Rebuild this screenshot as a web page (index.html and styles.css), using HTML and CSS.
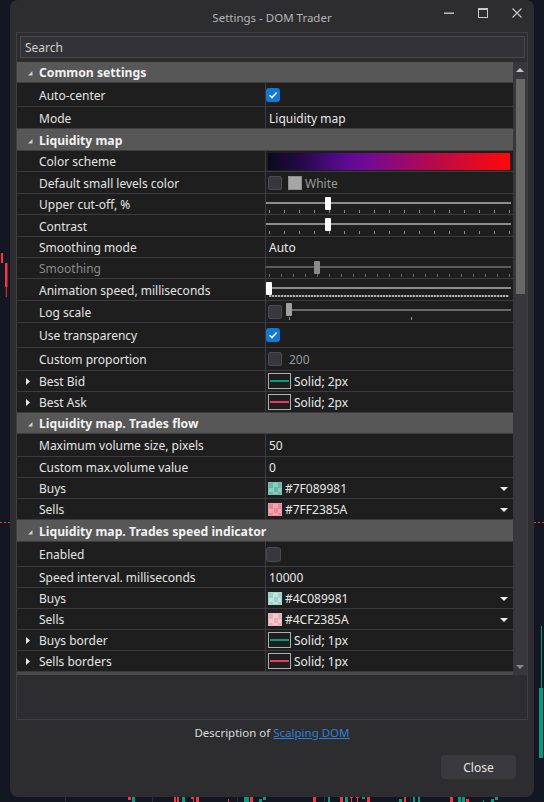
FILE: index.html
```html
<!DOCTYPE html>
<html>
<head>
<meta charset="utf-8">
<title>Settings - DOM Trader</title>
<link rel="stylesheet" href="styles.css">
</head>
<body>
<svg class="chart" width="544" height="802" viewBox="0 0 544 802">
  <g fill="#f23645">
    <rect x="1" y="253" width="2" height="10"/>
    <rect x="5" y="263" width="2.5" height="24"/>
    <rect x="5.8" y="286" width="1" height="11"/>
  </g>
  <rect x="10" y="283" width="1" height="3" fill="#089981"/>
  <line x1="0" y1="522.5" x2="10" y2="522.5" stroke="#f23645" stroke-dasharray="2 2"/>
  <line x1="534" y1="522.5" x2="544" y2="522.5" stroke="#f23645" stroke-dasharray="2 2"/>
  <rect x="541" y="626" width="1" height="64" fill="#089981"/>
  <rect x="539" y="688" width="4" height="70" fill="#089981"/>
  <g fill="#2a2e39">
    <rect x="65" y="797" width="1" height="5"/>
    <rect x="152" y="797" width="1" height="5"/>
    <rect x="237" y="797" width="1" height="5"/>
    <rect x="324" y="797" width="1" height="5"/>
    <rect x="410" y="797" width="1" height="5"/>
  </g>
  <g fill="#f23645">
    <rect x="128" y="797" width="3" height="3"/>
    <rect x="174" y="797" width="2" height="5"/>
    <rect x="177" y="797" width="2" height="5"/>
    <rect x="191" y="797" width="3" height="2"/>
    <rect x="193" y="797" width="1" height="5"/>
    <rect x="196" y="797" width="3" height="5"/>
    <rect x="228" y="799" width="1" height="3"/>
    <rect x="250" y="797" width="3" height="5"/>
    <rect x="313" y="797" width="3" height="5"/>
    <rect x="340" y="797" width="3" height="5"/>
    <rect x="350" y="797" width="3" height="1"/>
    <rect x="351" y="797" width="1" height="5"/>
    <rect x="356" y="797" width="3" height="1"/>
    <rect x="357" y="797" width="1" height="5"/>
    <rect x="367" y="797" width="3" height="5"/>
    <rect x="404" y="797" width="2" height="5"/>
    <rect x="450" y="797" width="3" height="5"/>
    <rect x="466" y="799" width="3" height="3"/>
  </g>
  <g fill="#089981">
    <rect x="132" y="797" width="3" height="5"/>
    <rect x="182" y="797" width="3" height="5"/>
    <rect x="244" y="797" width="3" height="5"/>
    <rect x="247" y="797" width="2" height="5"/>
    <rect x="259" y="799" width="3" height="3"/>
    <rect x="263" y="797" width="3" height="3"/>
    <rect x="328" y="797" width="2" height="5"/>
    <rect x="345" y="797" width="3" height="5"/>
    <rect x="362" y="797" width="3" height="2"/>
    <rect x="399" y="799" width="3" height="3"/>
    <rect x="413" y="797" width="2" height="5"/>
    <rect x="418" y="797" width="2" height="5"/>
    <rect x="458" y="797" width="3" height="5"/>
    <rect x="462" y="797" width="3" height="5"/>
    <rect x="483" y="800" width="1" height="2"/>
    <rect x="491" y="799" width="3" height="3"/>
    <rect x="495" y="797" width="3" height="3"/>
  </g>
</svg>

<div class="window">
  <div class="titlebar">
    <div class="title">Settings - DOM Trader</div>
    <div class="controls">
      <div class="ctl"><svg width="10" height="10" viewBox="0 0 10 10"><rect x="0" y="4.5" width="10" height="1.4" fill="#c8c8c8"/></svg></div>
      <div class="ctl"><svg width="10" height="10" viewBox="0 0 10 10"><rect x="0.5" y="0.5" width="9" height="9" fill="none" stroke="#c8c8c8"/><rect x="0" y="0" width="10" height="2" fill="#c8c8c8"/></svg></div>
      <div class="ctl"><svg width="10" height="10" viewBox="0 0 10 10"><path d="M0.5 0.5 L9.5 9.5 M9.5 0.5 L0.5 9.5" stroke="#c8c8c8" stroke-width="1.1"/></svg></div>
    </div>
  </div>

  <div class="panel">
    <div class="search">Search</div>
    <div class="grid">
      <div class="rows">
        <div class="row hdr h21"><span class="exp"><svg width="5" height="5" viewBox="0 0 5 5"><polygon points="4.5,0 4.5,4.5 0,4.5" fill="#d0d0d0"/></svg></span>Common settings</div>
        <div class="row h24"><div class="name"><span class="exp"></span>Auto-center</div><div class="val"><span class="cb on"><svg width="14" height="14" viewBox="0 0 14 14"><polyline points="3.5,7.2 6,9.6 10.6,4.6" fill="none" stroke="#fff" stroke-width="1.5"/></svg></span></div></div>
        <div class="row h22"><div class="name"><span class="exp"></span>Mode</div><div class="val"><span class="txt">Liquidity map</span></div></div>

        <div class="row hdr h22"><span class="exp"><svg width="5" height="5" viewBox="0 0 5 5"><polygon points="4.5,0 4.5,4.5 0,4.5" fill="#d0d0d0"/></svg></span>Liquidity map</div>
        <div class="row h21"><div class="name"><span class="exp"></span>Color scheme</div><div class="val"><span class="gradient"></span></div></div>
        <div class="row h22"><div class="name"><span class="exp"></span>Default small levels color</div><div class="val"><span class="cb off"></span><span class="gray-sw"></span><span class="dim-txt">White</span></div></div>
        <div class="row h21"><div class="name"><span class="exp"></span>Upper cut-off, %</div><div class="val"><div class="slider"><span class="track"></span><span class="ticks t15"></span><span class="thumb" style="left:59px"></span></div></div></div>
        <div class="row h22"><div class="name"><span class="exp"></span>Contrast</div><div class="val"><div class="slider"><span class="track"></span><span class="ticks t15"></span><span class="thumb" style="left:59px"></span></div></div></div>
        <div class="row h21"><div class="name"><span class="exp"></span>Smoothing mode</div><div class="val"><span class="txt">Auto</span></div></div>
        <div class="row h21"><div class="name disabled"><span class="exp"></span>Smoothing</div><div class="val"><div class="slider dis"><span class="track"></span><span class="ticks t12"></span><span class="thumb" style="left:48px"></span></div></div></div>
        <div class="row h22"><div class="name"><span class="exp"></span>Animation speed, milliseconds</div><div class="val"><div class="slider"><span class="track"></span><span class="ticks dense"></span><span class="thumb" style="left:0px"></span></div></div></div>
        <div class="row h22"><div class="name"><span class="exp"></span>Log scale</div><div class="val"><span class="cb off"></span><div class="slider log"><span class="track"></span><span class="tick" style="left:3px"></span><span class="tick" style="left:125px"></span><span class="thumb" style="left:0px"></span></div></div></div>
        <div class="row h25"><div class="name"><span class="exp"></span>Use transparency</div><div class="val"><span class="cb on"><svg width="14" height="14" viewBox="0 0 14 14"><polyline points="3.5,7.2 6,9.6 10.6,4.6" fill="none" stroke="#fff" stroke-width="1.5"/></svg></span></div></div>
        <div class="row h23"><div class="name"><span class="exp"></span>Custom proportion</div><div class="val"><span class="cb off"></span><span class="dim-txt num">200</span></div></div>
        <div class="row h21"><div class="name"><span class="exp"><svg width="4" height="7" viewBox="0 0 4 7"><polygon points="0,0 4,3.5 0,7" fill="#e8e8e8"/></svg></span>Best Bid</div><div class="val"><span class="line-sw teal"></span><span class="txt">Solid; 2px</span></div></div>
        <div class="row h21"><div class="name"><span class="exp"><svg width="4" height="7" viewBox="0 0 4 7"><polygon points="0,0 4,3.5 0,7" fill="#e8e8e8"/></svg></span>Best Ask</div><div class="val"><span class="line-sw red"></span><span class="txt">Solid; 2px</span></div></div>

        <div class="row hdr h21"><span class="exp"><svg width="5" height="5" viewBox="0 0 5 5"><polygon points="4.5,0 4.5,4.5 0,4.5" fill="#d0d0d0"/></svg></span>Liquidity map. Trades flow</div>
        <div class="row h23"><div class="name"><span class="exp"></span>Maximum volume size, pixels</div><div class="val"><span class="txt">50</span></div></div>
        <div class="row h21"><div class="name"><span class="exp"></span>Custom max.volume value</div><div class="val"><span class="txt">0</span></div></div>
        <div class="row h21"><div class="name"><span class="exp"></span>Buys</div><div class="val"><span class="chk teal50"></span><span class="txt hex">#7F089981</span><span class="dd"><svg width="8" height="4" viewBox="0 0 8 4"><polygon points="0,0 8,0 4,4" fill="#f0f0f0"/></svg></span></div></div>
        <div class="row h21"><div class="name"><span class="exp"></span>Sells</div><div class="val"><span class="chk red50"></span><span class="txt hex">#7FF2385A</span><span class="dd"><svg width="8" height="4" viewBox="0 0 8 4"><polygon points="0,0 8,0 4,4" fill="#f0f0f0"/></svg></span></div></div>

        <div class="row hdr h22"><span class="exp"><svg width="5" height="5" viewBox="0 0 5 5"><polygon points="4.5,0 4.5,4.5 0,4.5" fill="#d0d0d0"/></svg></span>Liquidity map. Trades speed indicator</div>
        <div class="row h25"><div class="name"><span class="exp"></span>Enabled</div><div class="val"><span class="cb off big"></span></div></div>
        <div class="row h21"><div class="name"><span class="exp"></span>Speed interval. milliseconds</div><div class="val"><span class="txt">10000</span></div></div>
        <div class="row h21"><div class="name"><span class="exp"></span>Buys</div><div class="val"><span class="chk teal30"></span><span class="txt hex">#4C089981</span><span class="dd"><svg width="8" height="4" viewBox="0 0 8 4"><polygon points="0,0 8,0 4,4" fill="#f0f0f0"/></svg></span></div></div>
        <div class="row h21"><div class="name"><span class="exp"></span>Sells</div><div class="val"><span class="chk red30"></span><span class="txt hex">#4CF2385A</span><span class="dd"><svg width="8" height="4" viewBox="0 0 8 4"><polygon points="0,0 8,0 4,4" fill="#f0f0f0"/></svg></span></div></div>
        <div class="row h21"><div class="name"><span class="exp"><svg width="4" height="7" viewBox="0 0 4 7"><polygon points="0,0 4,3.5 0,7" fill="#e8e8e8"/></svg></span>Buys border</div><div class="val"><span class="line-sw teal"></span><span class="txt">Solid; 1px</span></div></div>
        <div class="row h21"><div class="name"><span class="exp"><svg width="4" height="7" viewBox="0 0 4 7"><polygon points="0,0 4,3.5 0,7" fill="#e8e8e8"/></svg></span>Sells borders</div><div class="val"><span class="line-sw red"></span><span class="txt">Solid; 1px</span></div></div>
        <div class="hbar"></div>
      </div>
      <div class="sb">
        <div class="sb-btn"><svg width="8" height="4" viewBox="0 0 8 4"><polygon points="0,4 8,4 4,0" fill="#c8c8c8"/></svg></div>
        <div class="sb-thumb"></div>
        <div class="sb-space"></div>
        <div class="sb-btn"><svg width="8" height="4" viewBox="0 0 8 4"><polygon points="0,0 8,0 4,4" fill="#8a8a8a"/></svg></div>
      </div>
    </div>
    <div class="desc-area"></div>
  </div>

  <div class="desc">Description of <span class="link">Scalping DOM</span></div>
  <div class="footer"><div class="btn">Close</div></div>
</div>
</body>
</html>
```

FILE: styles.css
```css
* { box-sizing: border-box; }
html, body { margin: 0; padding: 0; }
body {
  width: 544px;
  height: 802px;
  overflow: hidden;
  position: relative;
  background: #131722;
  font-family: "Noto Sans", "Open Sans", "DejaVu Sans", sans-serif;
  font-size: 12px;
  color: #e4e4e4;
}
.chart { position: absolute; left: 0; top: 0; }

.window {
  position: relative;
  margin-left: 10px;
  width: 524px;
  height: 797px;
  background: #2d2d30;
  border-radius: 8px;
  display: flex;
  flex-direction: column;
}

.titlebar {
  height: 32px;
  flex: none;
  display: grid;
  grid-template-columns: 1fr auto 1fr;
}
.title {
  grid-column: 2;
  align-self: center;
  color: #b4b4b4;
  font-size: 11.5px;
  padding-top: 2px;
}
.controls {
  grid-column: 3;
  justify-self: end;
  display: flex;
}
.ctl {
  width: 34px;
  height: 26px;
  display: flex;
  align-items: center;
  justify-content: center;
}

.panel {
  margin: 0 6px;
  height: 688px;
  border: 1px solid #3f3f46;
  display: flex;
  flex-direction: column;
  flex: none;
}
.search {
  margin: 3px 2px 0 3px;
  height: 22px;
  background: #333337;
  border: 1px solid #48484e;
  color: #cfcfcf;
  padding-left: 4px;
  line-height: 21px;
  font-size: 12px;
}
.grid {
  margin-top: 4px;
  height: 613px;
  display: flex;
}
.rows {
  width: 496px;
  display: flex;
  flex-direction: column;
  background: #1e1e1e;
}
.row {
  display: flex;
  background: #1e1e1e;
  border-bottom: 1px solid #3b3b40;
}
.h21 { height: 21px; }
.h22 { height: 22px; }
.h23 { height: 23px; }
.h24 { height: 24px; }
.h25 { height: 25px; }

.hdr {
  background: #575757;
  border-bottom-color: #3d3d3d;
  align-items: center;
  font-weight: bold;
  font-size: 12.2px;
  color: #f2f2f2;
  white-space: nowrap;
  padding-top: 1px;
}
.exp {
  width: 22px;
  flex: none;
  display: flex;
  align-items: center;
  padding-left: 9px;
}
.hdr .exp svg { margin-left: 2px; margin-top: 2px; }

.name {
  width: 249px;
  flex: none;
  border-right: 1px solid #3b3b40;
  display: flex;
  align-items: center;
  white-space: nowrap;
  padding-top: 1px;
}
.name .exp svg { margin-top: -1px; }
.name.disabled { color: #8a8a8a; }
.val {
  flex: 1;
  display: flex;
  align-items: center;
  min-width: 0;
}
.txt { margin-left: 3px; color: #e8e8e8; white-space: nowrap; padding-top: 1px; }
.txt.hex { margin-left: 3px; }
.dim-txt { color: #9a9a9a; margin-left: 3px; padding-top: 1px; }
.dim-txt.num { margin-left: 7px; }

.cb {
  width: 14px;
  height: 14px;
  border-radius: 3px;
  flex: none;
  display: block;
}
.cb.on { background: #1079d6; margin-left: 0; }
.cb.on svg { display: block; }
.cb.off { background: #38383c; border: 1px solid #4a4a50; margin-left: 2px; border-radius: 2px; }
.cb.off.big { width: 15px; height: 15px; margin-left: 0; border-radius: 3px; }

.gradient {
  display: block;
  margin-left: 2px;
  width: 242px;
  height: 17px;
  background: linear-gradient(to right, #0a0a1e 0%, #240a48 14%, #500a84 28%, #6a0a9a 38%, #880a7c 50%, #ac0a56 64%, #d20a34 80%, #ff0808 100%);
}
.gray-sw {
  display: block;
  width: 14px;
  height: 14px;
  margin-left: 6px;
  background: #a6a6a6;
  border: 1px solid #8e8e8e;
}

.slider {
  position: relative;
  align-self: stretch;
  flex: 1;
  margin-right: 2px;
}
.slider .track {
  position: absolute;
  left: 0;
  right: 0;
  top: 8px;
  height: 2px;
  background: #8c8c8c;
}
.slider .thumb {
  position: absolute;
  top: 3px;
  width: 6px;
  height: 13px;
  background: #ffffff;
  border-radius: 1px;
}
.slider .ticks {
  position: absolute;
  top: 16px;
  left: 3px;
  width: 241px;
  height: 3px;
}
.ticks.t15 { background: repeating-linear-gradient(to right, #8c8c8c 0 1px, transparent 1px 15px); }
.ticks.t12 { background: repeating-linear-gradient(to right, #6a6a6a 0 1px, transparent 1px 12px); }
.ticks.dense { top: 16px; height: 2px; background: repeating-linear-gradient(to right, #a8a8a8 0 2px, #555 2px 3px); width: 240px; }
.slider.dis .track { background: #5c5c5c; }
.slider.dis .thumb { background: #8c8c8c; }
.slider.log { margin-left: 4px; }
.slider.log .track { background: #6a6a6a; top: 8px; }
.slider.log .thumb { background: #a0a0a0; top: 2px; }
.slider.log .tick {
  position: absolute;
  top: 16px;
  width: 1px;
  height: 3px;
  background: #8c8c8c;
}

.line-sw {
  position: relative;
  display: block;
  width: 23px;
  height: 16px;
  margin-left: 2px;
  border: 1px solid #b0b0b0;
  flex: none;
}
.line-sw::after {
  content: "";
  position: absolute;
  left: 1px;
  right: 1px;
  top: 6px;
  height: 2px;
}
.line-sw.teal::after { background: #089981; }
.line-sw.red::after { background: #f2385a; }

.chk {
  display: block;
  width: 14px;
  height: 13px;
  margin-left: 2px;
  flex: none;
  border: 1px solid #9a9a9a;
  background-size: 9px 9px;
}
.chk.teal50 { background-color: #6ab4a8; background-image: conic-gradient(#86cfc2 25%, transparent 0 50%, #86cfc2 0 75%, transparent 0); border-color: #7fbdb3; }
.chk.red50 { background-color: #e88699; background-image: conic-gradient(#f7a0b0 25%, transparent 0 50%, #f7a0b0 0 75%, transparent 0); border-color: #e89aa8; }
.chk.teal30 { background-color: #a0d0c7; background-image: conic-gradient(#bae4dc 25%, transparent 0 50%, #bae4dc 0 75%, transparent 0); border-color: #a8d4cc; }
.chk.red30 { background-color: #e6b0bb; background-image: conic-gradient(#f9c6cf 25%, transparent 0 50%, #f9c6cf 0 75%, transparent 0); border-color: #e8b8c2; }
.dd {
  margin-left: auto;
  margin-right: 5px;
  display: flex;
  align-items: center;
  padding-top: 1px;
}
.hbar { height: 3px; background: #4a4a4a; flex: none; }

.sb {
  width: 14px;
  background: #38383c;
  display: flex;
  flex-direction: column;
}
.sb-btn {
  height: 16px;
  display: flex;
  align-items: center;
  justify-content: center;
  flex: none;
}
.sb-thumb {
  margin: 1px 2px 0 3px;
  height: 215px;
  background: #686868;
  flex: none;
}
.sb-space { flex: 1; }

.desc-area { flex: 1; }

.desc {
  margin-top: 3px;
  height: 20px;
  line-height: 20px;
  text-align: center;
  color: #dcdcdc;
  font-size: 11.5px;
}
.link { color: #2f7fd6; text-decoration: underline; }

.footer {
  display: flex;
  justify-content: flex-end;
  padding-right: 18px;
  margin-top: 12px;
}
.btn {
  width: 75px;
  height: 24px;
  background: #3a3a3e;
  border-radius: 4px;
  display: flex;
  align-items: center;
  justify-content: center;
  color: #e4e4e4;
  font-size: 12px;
}
```
